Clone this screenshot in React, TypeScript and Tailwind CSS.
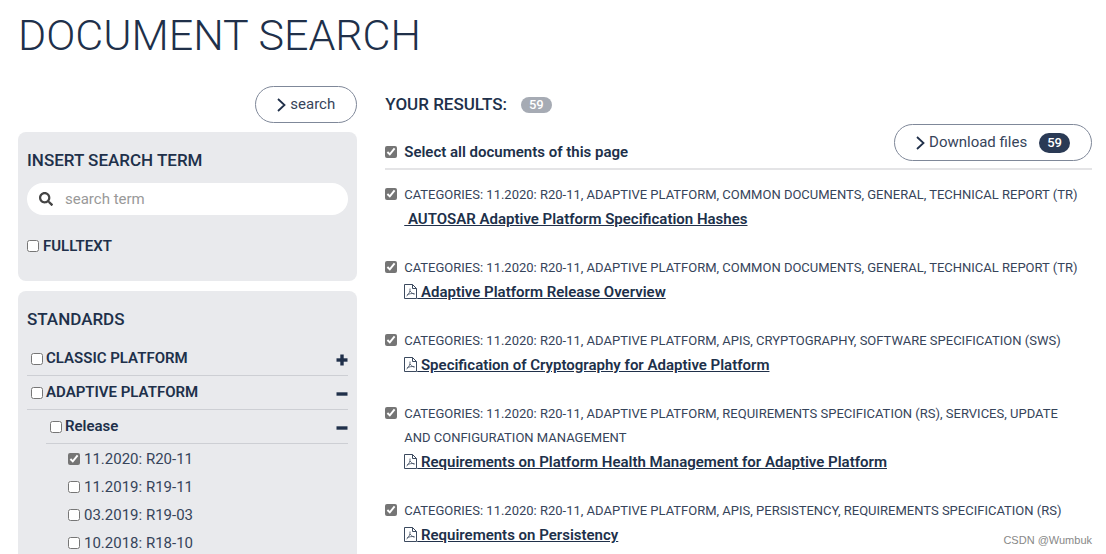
// Document search page with filter sidebar and result list
import React, { useState } from 'react'
import { FaSearch } from 'react-icons/fa'

interface DocumentResult {
  id: string
  categories: string
  title: string
  pdf: boolean
}

const documents: DocumentResult[] = [
  {
    id: 'hashes',
    categories: '11.2020: R20-11, ADAPTIVE PLATFORM, COMMON DOCUMENTS, GENERAL, TECHNICAL REPORT (TR)',
    title: 'AUTOSAR Adaptive Platform Specification Hashes',
    pdf: false,
  },
  {
    id: 'release-overview',
    categories: '11.2020: R20-11, ADAPTIVE PLATFORM, COMMON DOCUMENTS, GENERAL, TECHNICAL REPORT (TR)',
    title: 'Adaptive Platform Release Overview',
    pdf: true,
  },
  {
    id: 'cryptography',
    categories: '11.2020: R20-11, ADAPTIVE PLATFORM, APIS, CRYPTOGRAPHY, SOFTWARE SPECIFICATION (SWS)',
    title: 'Specification of Cryptography for Adaptive Platform',
    pdf: true,
  },
  {
    id: 'health-management',
    categories:
      '11.2020: R20-11, ADAPTIVE PLATFORM, REQUIREMENTS SPECIFICATION (RS), SERVICES, UPDATE AND CONFIGURATION MANAGEMENT',
    title: 'Requirements on Platform Health Management for Adaptive Platform',
    pdf: true,
  },
  {
    id: 'persistency',
    categories: '11.2020: R20-11, ADAPTIVE PLATFORM, APIS, PERSISTENCY, REQUIREMENTS SPECIFICATION (RS)',
    title: 'Requirements on Persistency',
    pdf: true,
  },
]

const releases = ['11.2020: R20-11', '11.2019: R19-11', '03.2019: R19-03', '10.2018: R18-10']

const Chevron: React.FC = () => (
  <svg viewBox="0 0 9 14" className="h-3.5 w-[9px] shrink-0" fill="none" stroke="#20304a" strokeWidth="1.8">
    <path d="M1 1l6.500 6-6.500 6" />
  </svg>
)

const PdfIcon: React.FC = () => (
  <svg
    viewBox="0 0 13 15"
    className="inline-block h-[15px] w-[13px] align-[-2px]"
    fill="none"
    stroke="#3c4a5f"
    strokeWidth="1"
  >
    <path d="M.5.5h8l4 4v10H.5z" />
    <path d="M8.5.5v4h4" />
    <path d="M6 4.500c.3 2.500-.8 5.500-3.500 7.500M3 11c2-1.300 5-1.800 7.500-1.300M6.200 7c.8 1.500 2 2.600 4.300 3.200" strokeWidth=".8" />
  </svg>
)

// Plus when the group is closed, minus when it is open
const ToggleIcon: React.FC<{ open: boolean }> = ({ open }) => (
  <svg viewBox="0 0 12 12" className="size-3" fill="none" stroke="#20304a" strokeWidth="3.4" strokeLinejoin="round">
    <path d="M.5 6h11" />
    {!open && <path d="M6 .5v11" />}
  </svg>
)

interface FilterHeaderProps {
  label: string
  open: boolean
}

const FilterHeader: React.FC<FilterHeaderProps> = ({ label, open }) => (
  <div className="flex h-[34px] items-center justify-between border-b border-[#cdcfd4] pl-1">
    <label className="flex items-center gap-[3px] font-semibold">
      <input type="checkbox" className="size-3 accent-[#757575]" />
      {label}
    </label>
    <button type="button" aria-label={open ? `Collapse ${label}` : `Expand ${label}`} className="pt-0.5">
      <ToggleIcon open={open} />
    </button>
  </div>
)

const App: React.FC = () => {
  const [term, setTerm] = useState('')
  const [selected, setSelected] = useState<string[]>(documents.map((doc) => doc.id))

  const allSelected = selected.length === documents.length

  const toggle = (id: string) => {
    setSelected((ids) => (ids.includes(id) ? ids.filter((item) => item !== id) : [...ids, id]))
  }

  return (
    <div className="relative h-screen overflow-hidden bg-white pt-2 pr-3.5 pl-[18px] font-['Roboto',sans-serif] text-[15px] text-[#20304a]">
      <h1 className="text-[43px] leading-[54px] font-light">DOCUMENT SEARCH</h1>

      <div className="mt-6 grid grid-cols-[minmax(0,12fr)_minmax(0,25fr)] gap-7">
        {/* Filters */}
        <aside>
          <div className="flex justify-end">
            <button
              type="submit"
              form="search-form"
              className="flex h-[37px] items-center gap-1 rounded-full border border-[#7f8899] px-[21px] text-[#36445a]"
            >
              <Chevron />
              search
            </button>
          </div>

          <form
            id="search-form"
            onSubmit={(e) => e.preventDefault()}
            className="mt-[9px] h-[149px] rounded-lg bg-[#e9eaed] px-[9px] pt-4"
          >
            <h2 className="text-[17px] leading-6 font-medium">INSERT SEARCH TERM</h2>
            <div className="mt-[11px] flex h-8 items-center gap-3 rounded-full bg-white px-3">
              <FaSearch className="size-3.5 shrink-0 text-[#444]" />
              <input
                type="text"
                aria-label="search term"
                placeholder="search term"
                value={term}
                onChange={(e) => setTerm(e.target.value)}
                className="min-w-0 flex-1 outline-none placeholder:text-[#999]"
              />
            </div>
            <label className="mt-5 flex items-center gap-1 font-semibold">
              <input type="checkbox" className="size-3 accent-[#757575]" />
              FULLTEXT
            </label>
          </form>

          <section className="mt-2.5 rounded-lg bg-[#e9eaed] px-[9px] pt-4 pb-4">
            <h2 className="mb-[11px] text-[17px] leading-6 font-medium">STANDARDS</h2>
            <FilterHeader label="CLASSIC PLATFORM" open={false} />
            <FilterHeader label="ADAPTIVE PLATFORM" open />
            <div className="pl-[19px]">
              <FilterHeader label="Release" open />
              <ul className="pt-px pl-[22px]">
                {releases.map((release, index) => (
                  <li key={release}>
                    <label className="flex h-7 items-center gap-1 text-[#36445a]">
                      <input type="checkbox" defaultChecked={index === 0} className="size-3 accent-[#757575]" />
                      {release}
                    </label>
                  </li>
                ))}
              </ul>
            </div>
          </section>
        </aside>

        {/* Results */}
        <main>
          <h2 className="flex h-[38px] items-center gap-3.5 text-[17px] font-medium">
            YOUR RESULTS:
            <span className="rounded-full bg-[#a6abb4] px-2 text-[13px] leading-4 text-white">59</span>
          </h2>

          <div className="flex h-[46px] items-start justify-between border-b-2 border-[#e4e4e6]">
            <label className="flex h-14 items-center gap-[7px] font-semibold">
              <input
                type="checkbox"
                checked={allSelected}
                onChange={() => setSelected(allSelected ? [] : documents.map((doc) => doc.id))}
                className="size-3 accent-[#757575]"
              />
              Select all documents of this page
            </label>
            <button
              type="button"
              className="flex h-[37px] items-center gap-1 rounded-full border border-[#7f8899] px-[21px] text-[#36445a]"
            >
              <Chevron />
              Download files
              <span className="ml-2 rounded-full bg-[#2a3a55] px-2 text-[13px] leading-5 font-medium text-white">
                59
              </span>
            </button>
          </div>

          <ul className="space-y-6 pt-[13px] pr-2">
            {documents.map((doc) => (
              <li key={doc.id} className="flex gap-[7px]">
                <input
                  type="checkbox"
                  aria-label={doc.title}
                  checked={selected.includes(doc.id)}
                  onChange={() => toggle(doc.id)}
                  className="mt-[5px] size-3 shrink-0 accent-[#757575]"
                />
                <div>
                  <p className="text-[13px] leading-6 text-[#36445a]">{`CATEGORIES: ${doc.categories}`}</p>
                  <a href={`#${doc.id}`} className="block leading-[25px] font-semibold whitespace-pre-wrap underline">
                    {doc.pdf && <PdfIcon />}
                    {' ' + doc.title}
                  </a>
                </div>
              </li>
            ))}
          </ul>
        </main>
      </div>

      <span className="absolute right-3.5 bottom-1.5 font-['Liberation_Sans',sans-serif] text-[11px] text-[#888]">
        CSDN @Wumbuk
      </span>
    </div>
  )
}

export default App
